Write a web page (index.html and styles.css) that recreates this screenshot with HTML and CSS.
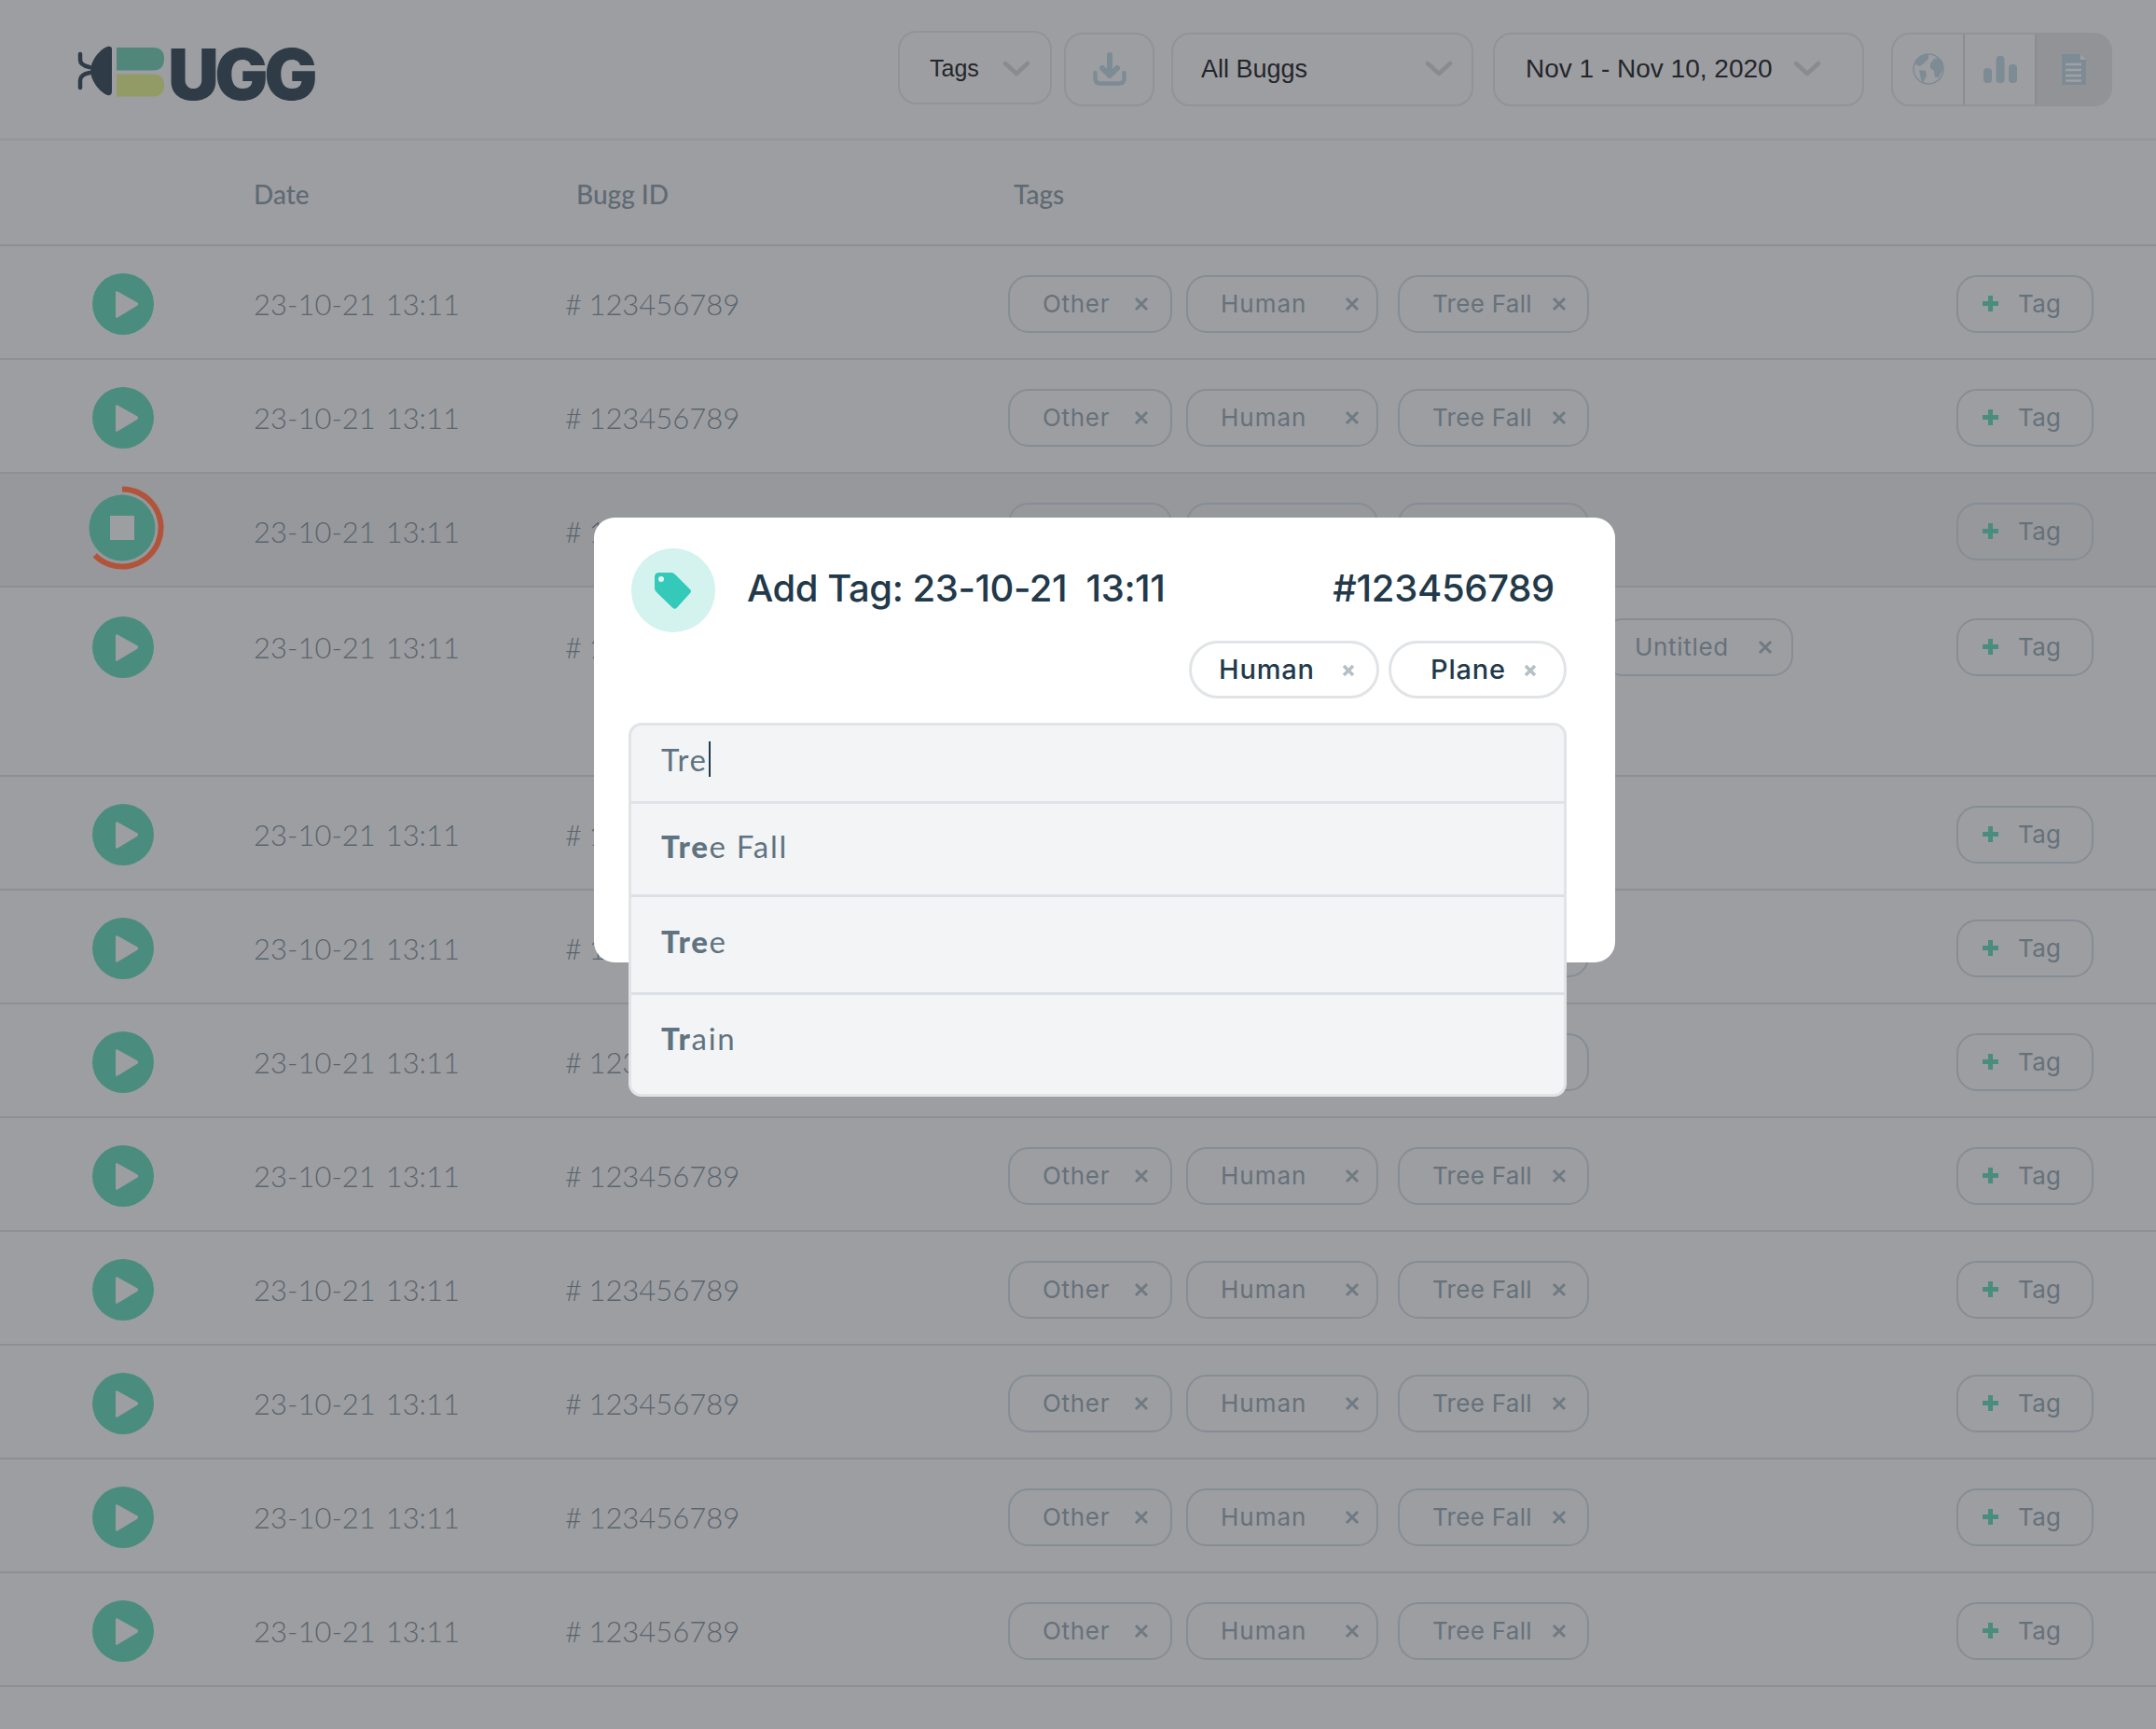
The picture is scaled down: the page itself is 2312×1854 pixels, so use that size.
FILE: index.html
```html
<!DOCTYPE html>
<html>
<head>
    <title>Bugg - Add Tag</title>
    <link rel="stylesheet" href="styles.css">
</head>
<body>

<svg class="defs" width="0" height="0">
    <symbol id="play" viewBox="0 0 66 66">
        <circle cx="33" cy="33" r="33" fill="#4a8d7e"/>
        <path d="M25 20.5 Q25 18.5 27 19.5 L48.5 31.5 Q50 33 48.5 34.5 L27 47.5 Q25 48.5 25 46.5 Z" fill="#9d9ea2"/>
    </symbol>
    <symbol id="cross" viewBox="0 0 16 16">
        <path d="M2 2 L14 14 M14 2 L2 14" stroke="#6f7a83" stroke-width="3" fill="none"/>
    </symbol>
    <symbol id="plus" viewBox="0 0 19 19">
        <path d="M9.5 1 V18 M1 9.5 H18" stroke="#4a8d7e" stroke-width="5" fill="none"/>
    </symbol>
    <symbol id="chevron" viewBox="0 0 30 18">
        <path d="M3 3 L15 14 L27 3" stroke="#8a8b8f" stroke-width="4.500" stroke-linecap="round" stroke-linejoin="round" fill="none"/>
    </symbol>
</svg>

<div class="page">
    <header class="topbar">
        <div class="logo">
            <svg class="logo-mark" width="94" height="56" viewBox="0 0 94 56">
                <path d="M7 10 V16 Q7 22 17 24 M17 30 Q7 32 7 38 V46" stroke="#2f3c47" stroke-width="4.500" fill="none" stroke-linecap="round"/>
                <path d="M36 2 Q41 1 41 5 V50 Q41 55 36 54 C28 51 18 38 18 28 C18 17 28 5 36 2 Z" fill="#2f3c47"/>
                <path d="M46 3 H85 Q97 3 97 15 Q97 27.500 85 27.500 H46 Z" fill="#50877a"/>
                <path d="M46 31.500 H85 Q97 31.500 97 43.500 Q97 55.500 85 55.500 H46 Z" fill="#929a66"/>
            </svg>
            <span class="logo-text">UGG</span>
        </div>
        <div class="controls">
            <div class="select select-tags"><span>Tags</span><svg width="30" height="18"><use href="#chevron"/></svg></div>
            <div class="icon-btn">
                <svg width="36" height="36" viewBox="0 0 36 36">
                    <path d="M18 3 V23 M10 17 L18 25 L26 17" stroke="#7d8b95" stroke-width="6" stroke-linecap="round" stroke-linejoin="round" fill="none"/>
                    <path d="M2.500 22 V28 Q2.500 33.500 8 33.500 H28 Q33.500 33.500 33.500 28 V22" stroke="#7d8b95" stroke-width="4.500" stroke-linecap="round" fill="none"/>
                </svg>
            </div>
            <div class="select select-buggs"><span>All Buggs</span><svg width="30" height="18"><use href="#chevron"/></svg></div>
            <div class="select select-date"><span>Nov 1 - Nov 10, 2020</span><svg width="30" height="18"><use href="#chevron"/></svg></div>
            <div class="segments">
                <div class="segment">
                    <svg width="34" height="34" viewBox="0 0 34 34">
                        <circle cx="17" cy="17" r="16" fill="none" stroke="#7d8b95" stroke-width="1.500"/>
                        <path d="M4 6 L10 2 L17 1 L17 6 L12 11 L8 14 L3 12 Z M7 18 L14 19 L15 24 L11 32 L9 28 L8 23 Z M19 11 L23 6 L28 5 L32 9 L33 16 L28 26 L24 26 L23 19 L19 16 Z" fill="#7d8b95"/>
                    </svg>
                </div>
                <div class="segment">
                    <svg width="36" height="29" viewBox="0 0 36 29">
                        <rect x="0" y="13" width="9" height="16" rx="4" fill="#7d8b95"/>
                        <rect x="13.500" y="0" width="9" height="29" rx="4" fill="#7d8b95"/>
                        <rect x="27" y="9" width="9" height="20" rx="4" fill="#7d8b95"/>
                    </svg>
                </div>
                <div class="segment segment-active">
                    <svg width="26" height="33" viewBox="0 0 26 33">
                        <path d="M0 0 H20 L26 6 V33 H0 Z" fill="#7d8b95"/>
                        <path d="M20 0 L26 6 H20 Z" fill="#a0a1a5"/>
                        <path d="M4 11 H21 M4 17 H21 M4 23 H21 M4 28.500 H21" stroke="#a0a1a5" stroke-width="2.500"/>
                    </svg>
                </div>
            </div>
        </div>
    </header>

    <div class="table-head">
        <span class="th th-date">Date</span>
        <span class="th th-id">Bugg ID</span>
        <span class="th th-tags">Tags</span>
    </div>

    <div class="row">
        <div class="cell-play"><svg width="66" height="66"><use href="#play"/></svg></div>
        <div class="cell-date">23-10-21&nbsp; 13:11</div>
        <div class="cell-id"># 123456789</div>
        <div class="cell-tags">
            <span class="chip chip-other">Other<svg width="16" height="16"><use href="#cross"/></svg></span>
            <span class="chip chip-human">Human<svg width="16" height="16"><use href="#cross"/></svg></span>
            <span class="chip chip-tree">Tree Fall<svg width="16" height="16"><use href="#cross"/></svg></span>
        </div>
        <div class="add-tag"><svg width="19" height="19"><use href="#plus"/></svg>Tag</div>
    </div>
    <div class="row">
        <div class="cell-play"><svg width="66" height="66"><use href="#play"/></svg></div>
        <div class="cell-date">23-10-21&nbsp; 13:11</div>
        <div class="cell-id"># 123456789</div>
        <div class="cell-tags">
            <span class="chip chip-other">Other<svg width="16" height="16"><use href="#cross"/></svg></span>
            <span class="chip chip-human">Human<svg width="16" height="16"><use href="#cross"/></svg></span>
            <span class="chip chip-tree">Tree Fall<svg width="16" height="16"><use href="#cross"/></svg></span>
        </div>
        <div class="add-tag"><svg width="19" height="19"><use href="#plus"/></svg>Tag</div>
    </div>
    <div class="row row-playing">
        <div class="cell-play">
            <svg class="stop-btn" width="90" height="90" viewBox="0 0 90 90">
                <circle cx="45" cy="45" r="35.500" fill="#4a8d7e"/>
                <rect x="32" y="32" width="26" height="26" fill="#9d9ea2"/>
                <path d="M45 3.500 A41.500 41.500 0 1 1 15.700 74.300" stroke="#b1543a" stroke-width="6" fill="none"/>
            </svg>
        </div>
        <div class="cell-date">23-10-21&nbsp; 13:11</div>
        <div class="cell-id"># 123456789</div>
        <div class="cell-tags">
            <span class="chip chip-other">Other<svg width="16" height="16"><use href="#cross"/></svg></span>
            <span class="chip chip-human">Human<svg width="16" height="16"><use href="#cross"/></svg></span>
            <span class="chip chip-tree">Tree Fall<svg width="16" height="16"><use href="#cross"/></svg></span>
        </div>
        <div class="add-tag"><svg width="19" height="19"><use href="#plus"/></svg>Tag</div>
    </div>
    <div class="row row-tall">
        <div class="cell-play"><svg width="66" height="66"><use href="#play"/></svg></div>
        <div class="cell-date">23-10-21&nbsp; 13:11</div>
        <div class="cell-id"># 123456789</div>
        <div class="cell-tags">
            <span class="chip chip-other">Other<svg width="16" height="16"><use href="#cross"/></svg></span>
            <span class="chip chip-human">Human<svg width="16" height="16"><use href="#cross"/></svg></span>
            <span class="chip chip-tree">Tree Fall<svg width="16" height="16"><use href="#cross"/></svg></span>
            <span class="chip chip-untitled">Untitled<svg width="16" height="16"><use href="#cross"/></svg></span>
        </div>
        <div class="add-tag"><svg width="19" height="19"><use href="#plus"/></svg>Tag</div>
    </div>
    <div class="row">
        <div class="cell-play"><svg width="66" height="66"><use href="#play"/></svg></div>
        <div class="cell-date">23-10-21&nbsp; 13:11</div>
        <div class="cell-id"># 123456789</div>
        <div class="cell-tags">
            <span class="chip chip-other">Other<svg width="16" height="16"><use href="#cross"/></svg></span>
            <span class="chip chip-human">Human<svg width="16" height="16"><use href="#cross"/></svg></span>
            <span class="chip chip-tree">Tree Fall<svg width="16" height="16"><use href="#cross"/></svg></span>
        </div>
        <div class="add-tag"><svg width="19" height="19"><use href="#plus"/></svg>Tag</div>
    </div>
    <div class="row">
        <div class="cell-play"><svg width="66" height="66"><use href="#play"/></svg></div>
        <div class="cell-date">23-10-21&nbsp; 13:11</div>
        <div class="cell-id"># 123456789</div>
        <div class="cell-tags">
            <span class="chip chip-other">Other<svg width="16" height="16"><use href="#cross"/></svg></span>
            <span class="chip chip-human">Human<svg width="16" height="16"><use href="#cross"/></svg></span>
            <span class="chip chip-tree">Tree Fall<svg width="16" height="16"><use href="#cross"/></svg></span>
        </div>
        <div class="add-tag"><svg width="19" height="19"><use href="#plus"/></svg>Tag</div>
    </div>
    <div class="row">
        <div class="cell-play"><svg width="66" height="66"><use href="#play"/></svg></div>
        <div class="cell-date">23-10-21&nbsp; 13:11</div>
        <div class="cell-id"># 123456789</div>
        <div class="cell-tags">
            <span class="chip chip-other">Other<svg width="16" height="16"><use href="#cross"/></svg></span>
            <span class="chip chip-human">Human<svg width="16" height="16"><use href="#cross"/></svg></span>
            <span class="chip chip-tree">Tree Fall<svg width="16" height="16"><use href="#cross"/></svg></span>
        </div>
        <div class="add-tag"><svg width="19" height="19"><use href="#plus"/></svg>Tag</div>
    </div>
    <div class="row">
        <div class="cell-play"><svg width="66" height="66"><use href="#play"/></svg></div>
        <div class="cell-date">23-10-21&nbsp; 13:11</div>
        <div class="cell-id"># 123456789</div>
        <div class="cell-tags">
            <span class="chip chip-other">Other<svg width="16" height="16"><use href="#cross"/></svg></span>
            <span class="chip chip-human">Human<svg width="16" height="16"><use href="#cross"/></svg></span>
            <span class="chip chip-tree">Tree Fall<svg width="16" height="16"><use href="#cross"/></svg></span>
        </div>
        <div class="add-tag"><svg width="19" height="19"><use href="#plus"/></svg>Tag</div>
    </div>
    <div class="row">
        <div class="cell-play"><svg width="66" height="66"><use href="#play"/></svg></div>
        <div class="cell-date">23-10-21&nbsp; 13:11</div>
        <div class="cell-id"># 123456789</div>
        <div class="cell-tags">
            <span class="chip chip-other">Other<svg width="16" height="16"><use href="#cross"/></svg></span>
            <span class="chip chip-human">Human<svg width="16" height="16"><use href="#cross"/></svg></span>
            <span class="chip chip-tree">Tree Fall<svg width="16" height="16"><use href="#cross"/></svg></span>
        </div>
        <div class="add-tag"><svg width="19" height="19"><use href="#plus"/></svg>Tag</div>
    </div>
    <div class="row">
        <div class="cell-play"><svg width="66" height="66"><use href="#play"/></svg></div>
        <div class="cell-date">23-10-21&nbsp; 13:11</div>
        <div class="cell-id"># 123456789</div>
        <div class="cell-tags">
            <span class="chip chip-other">Other<svg width="16" height="16"><use href="#cross"/></svg></span>
            <span class="chip chip-human">Human<svg width="16" height="16"><use href="#cross"/></svg></span>
            <span class="chip chip-tree">Tree Fall<svg width="16" height="16"><use href="#cross"/></svg></span>
        </div>
        <div class="add-tag"><svg width="19" height="19"><use href="#plus"/></svg>Tag</div>
    </div>
    <div class="row">
        <div class="cell-play"><svg width="66" height="66"><use href="#play"/></svg></div>
        <div class="cell-date">23-10-21&nbsp; 13:11</div>
        <div class="cell-id"># 123456789</div>
        <div class="cell-tags">
            <span class="chip chip-other">Other<svg width="16" height="16"><use href="#cross"/></svg></span>
            <span class="chip chip-human">Human<svg width="16" height="16"><use href="#cross"/></svg></span>
            <span class="chip chip-tree">Tree Fall<svg width="16" height="16"><use href="#cross"/></svg></span>
        </div>
        <div class="add-tag"><svg width="19" height="19"><use href="#plus"/></svg>Tag</div>
    </div>
    <div class="row">
        <div class="cell-play"><svg width="66" height="66"><use href="#play"/></svg></div>
        <div class="cell-date">23-10-21&nbsp; 13:11</div>
        <div class="cell-id"># 123456789</div>
        <div class="cell-tags">
            <span class="chip chip-other">Other<svg width="16" height="16"><use href="#cross"/></svg></span>
            <span class="chip chip-human">Human<svg width="16" height="16"><use href="#cross"/></svg></span>
            <span class="chip chip-tree">Tree Fall<svg width="16" height="16"><use href="#cross"/></svg></span>
        </div>
        <div class="add-tag"><svg width="19" height="19"><use href="#plus"/></svg>Tag</div>
    </div>

    <div class="modal">
        <div class="modal-head">
            <div class="tag-badge">
                <svg class="tag-icon" width="40" height="40" viewBox="0 0 40 40">
                    <path d="M0 5 Q0 0 5 0 H18 Q20 0 22 2 L38 18 Q40 20 38 22 L24 37.500 Q21.500 40 19 37.500 L2 21 Q0 19 0 17 Z" fill="#34c9b8"/>
                    <circle cx="7" cy="7" r="3" fill="#e4f7f4"/>
                </svg>
            </div>
            <h2 class="modal-title">Add Tag: 23-10-21&nbsp; 13:11</h2>
            <span class="modal-id">#123456789</span>
        </div>
        <div class="modal-chips">
            <span class="pill pill-human">Human<svg width="16" height="16" viewBox="0 0 16 16"><path d="M3 3 L13 13 M13 3 L3 13" stroke="#b5bfc6" stroke-width="3.500"/></svg></span>
            <span class="pill pill-plane">Plane<svg width="16" height="16" viewBox="0 0 16 16"><path d="M3 3 L13 13 M13 3 L3 13" stroke="#b5bfc6" stroke-width="3.500"/></svg></span>
        </div>
        <div class="combo">
            <div class="combo-input">Tre<span class="caret"></span></div>
            <div class="combo-item"><span><b>Tre</b>e Fall</span></div>
            <div class="combo-item combo-item-b"><span><b>Tre</b>e</span></div>
            <div class="combo-item combo-item-c"><span><b>Tr</b>ain</span></div>
        </div>
    </div>
</div>

</body>
</html>
```

FILE: styles.css
```css
body {
    margin: 0;
    background-color: #9d9ea2;
    font-family: "Lato", sans-serif;
}
.defs {
    display: block;
    height: 0;
}
.page {
    position: relative;
    height: 1854px;
    overflow: hidden;
}

/* top bar */
.topbar {
    display: flex;
    align-items: center;
    justify-content: space-between;
    box-sizing: border-box;
    height: 151px;
    padding: 0 47px 0 79px;
    border-bottom: 3px solid #96979c;
}
.logo {
    display: flex;
    align-items: center;
}
.logo-mark {
    overflow: visible;
    margin-top: 3px;
}
.logo-text {
    margin-left: 7px;
    margin-top: 9px;
    font-family: "Inter", sans-serif;
    font-weight: 900;
    font-size: 76px;
    line-height: 76px;
    letter-spacing: -4.500px;
    color: #2f3c47;
}
.controls {
    display: flex;
    align-items: center;
}
.select {
    display: flex;
    align-items: center;
    justify-content: space-between;
    box-sizing: border-box;
    height: 79px;
    border: 2px solid #929398;
    border-radius: 20px;
    font-family: "Liberation Sans", Arial, sans-serif;
    font-size: 27px;
    color: #24262a;
}
.select-tags {
    width: 165px;
    margin-bottom: 4px;
    padding: 3px 21px 0 32px;
    font-size: 25px;
}
.select-buggs {
    width: 324px;
    margin-left: 18px;
    padding: 0 20px 0 30px;
}
.select-date {
    width: 398px;
    margin-left: 21px;
    padding: 0 44px 0 33px;
    font-size: 28px;
}
.icon-btn {
    display: flex;
    align-items: center;
    justify-content: center;
    box-sizing: border-box;
    width: 97px;
    height: 79px;
    margin-left: 13px;
    border: 2px solid #929398;
    border-radius: 20px;
}
.segments {
    display: flex;
    box-sizing: border-box;
    width: 237px;
    height: 79px;
    margin-left: 29px;
    border: 2px solid #929398;
    border-radius: 20px;
    overflow: hidden;
}
.segment {
    flex: 1;
    display: flex;
    align-items: center;
    justify-content: center;
    border-right: 2px solid #8a8c90;
}
.segment-active {
    flex: 0 0 79px;
    border-right: none;
    background-color: #929397;
}

/* table */
.table-head {
    display: grid;
    grid-template-columns: 272px 334px 475px 1fr;
    align-items: center;
    box-sizing: border-box;
    height: 113px;
    border-bottom: 2px solid #8e8f94;
}
.th {
    font-size: 28px;
    font-weight: 500;
    color: #5f6a73;
    margin-top: 2px;
}
.th-date {
    grid-column: 2;
}
.th-id {
    grid-column: 3;
    padding-left: 12px;
}
.th-tags {
    grid-column: 4;
    padding-left: 6px;
}
.row {
    display: grid;
    grid-template-columns: 272px 334px 475px 1fr 147px;
    grid-template-rows: 66px;
    box-sizing: border-box;
    height: 122px;
    padding: 29px 67px 0 0;
    border-bottom: 2px solid #8e8f94;
}
.row > div {
    display: flex;
    align-items: center;
}
.row-playing {
    background-color: #97989c;
}
.row-tall {
    height: 203px;
    padding-top: 31px;
}
.cell-play {
    padding-left: 99px;
}
.stop-btn {
    flex: none;
    margin: -8px 0 0 -13px;
}
.cell-date, .cell-id {
    font-size: 31px;
    font-weight: 300;
    color: #5a656e;
    white-space: nowrap;
}
.cell-date {
    word-spacing: -3px;
}
.cell-id {
    word-spacing: -1px;
}
.chip {
    display: flex;
    align-items: center;
    justify-content: space-between;
    flex: none;
    box-sizing: border-box;
    height: 62px;
    padding-left: 35px;
    padding-bottom: 2px;
    border: 2px solid #858d95;
    border-radius: 22px;
    font-family: "Inter", sans-serif;
    font-size: 26px;
    letter-spacing: 0.7px;
    color: #66717a;
}
.chip svg {
    margin-top: 2px;
}
.chip-other {
    width: 176px;
    padding-right: 23px;
    margin-right: 15px;
}
.chip-human {
    width: 206px;
    padding-right: 18px;
    margin-right: 21px;
    letter-spacing: 1px;
}
.chip-tree {
    width: 205px;
    padding-right: 22px;
    margin-right: 14px;
    letter-spacing: 0.300px;
}
.chip-untitled {
    width: 205px;
    padding-left: 33px;
    padding-right: 20px;
}
.add-tag {
    box-sizing: border-box;
    height: 62px;
    padding-left: 25px;
    padding-bottom: 2px;
    align-self: center;
    border: 2px solid #858d95;
    border-radius: 22px;
    font-family: "Inter", sans-serif;
    font-size: 26px;
    letter-spacing: 0.3px;
    color: #66717a;
}
.add-tag svg {
    margin-right: 20px;
}

/* modal */
.modal {
    position: absolute;
    left: 637px;
    top: 555px;
    box-sizing: border-box;
    width: 1095px;
    height: 477px;
    padding: 33px 52px 0 37px;
    background-color: #fff;
    border-radius: 22px;
}
.modal-head {
    display: flex;
    align-items: center;
    padding-left: 3px;
    padding-right: 13px;
}
.tag-badge {
    display: flex;
    align-items: center;
    justify-content: center;
    flex: none;
    width: 90px;
    height: 90px;
    margin-right: 34px;
    border-radius: 50%;
    background-color: #d4f2ee;
}
.tag-icon {
    margin-top: 2px;
}
.modal-title, .modal-id {
    font-family: "Inter", sans-serif;
    font-size: 40px;
    font-weight: 500;
    letter-spacing: -0.3px;
    color: #22394a;
}
.modal-title {
    flex: 1;
    margin: -5px 0 0;
    letter-spacing: -0.450px;
}
.modal-id {
    margin-top: -5px;
}
.modal-chips {
    display: flex;
    justify-content: flex-end;
    gap: 10px;
    margin-top: 9px;
}
.pill {
    display: flex;
    align-items: center;
    justify-content: space-between;
    box-sizing: border-box;
    height: 62px;
    padding-bottom: 2px;
    border: 3px solid #e1e4e7;
    border-radius: 31px;
    font-family: "Inter", sans-serif;
    font-size: 29px;
    font-weight: 500;
    letter-spacing: 0.8px;
    color: #22394a;
}
.pill svg {
    margin-top: 4px;
}
.pill-human {
    width: 204px;
    padding-left: 29px;
    padding-right: 22px;
}
.pill-plane {
    width: 191px;
    padding-left: 42px;
    padding-right: 28px;
}
.combo {
    margin-top: 26px;
    border: 3px solid #e1e4e7;
    border-radius: 14px;
    background-color: #f3f4f6;
    font-size: 33px;
    color: #5f7380;
    letter-spacing: 1.700px;
}
.combo-input {
    display: flex;
    align-items: center;
    box-sizing: border-box;
    height: 84px;
    padding: 0 0 10px 32px;
    border-bottom: 3px solid #dfe3e7;
}
.caret {
    width: 2px;
    height: 38px;
    margin-left: 1px;
    background-color: #22394a;
}
.combo-item {
    display: flex;
    box-sizing: border-box;
    height: 100px;
    padding: 25px 0 0 32px;
    border-bottom: 3px solid #dbe0e6;
}
.combo-item-b {
    height: 105px;
    padding-top: 27px;
}
.combo-item-c {
    height: 106px;
    padding-top: 26px;
    border-bottom: none;
}
.combo-item b {
    font-weight: 900;
}
```
